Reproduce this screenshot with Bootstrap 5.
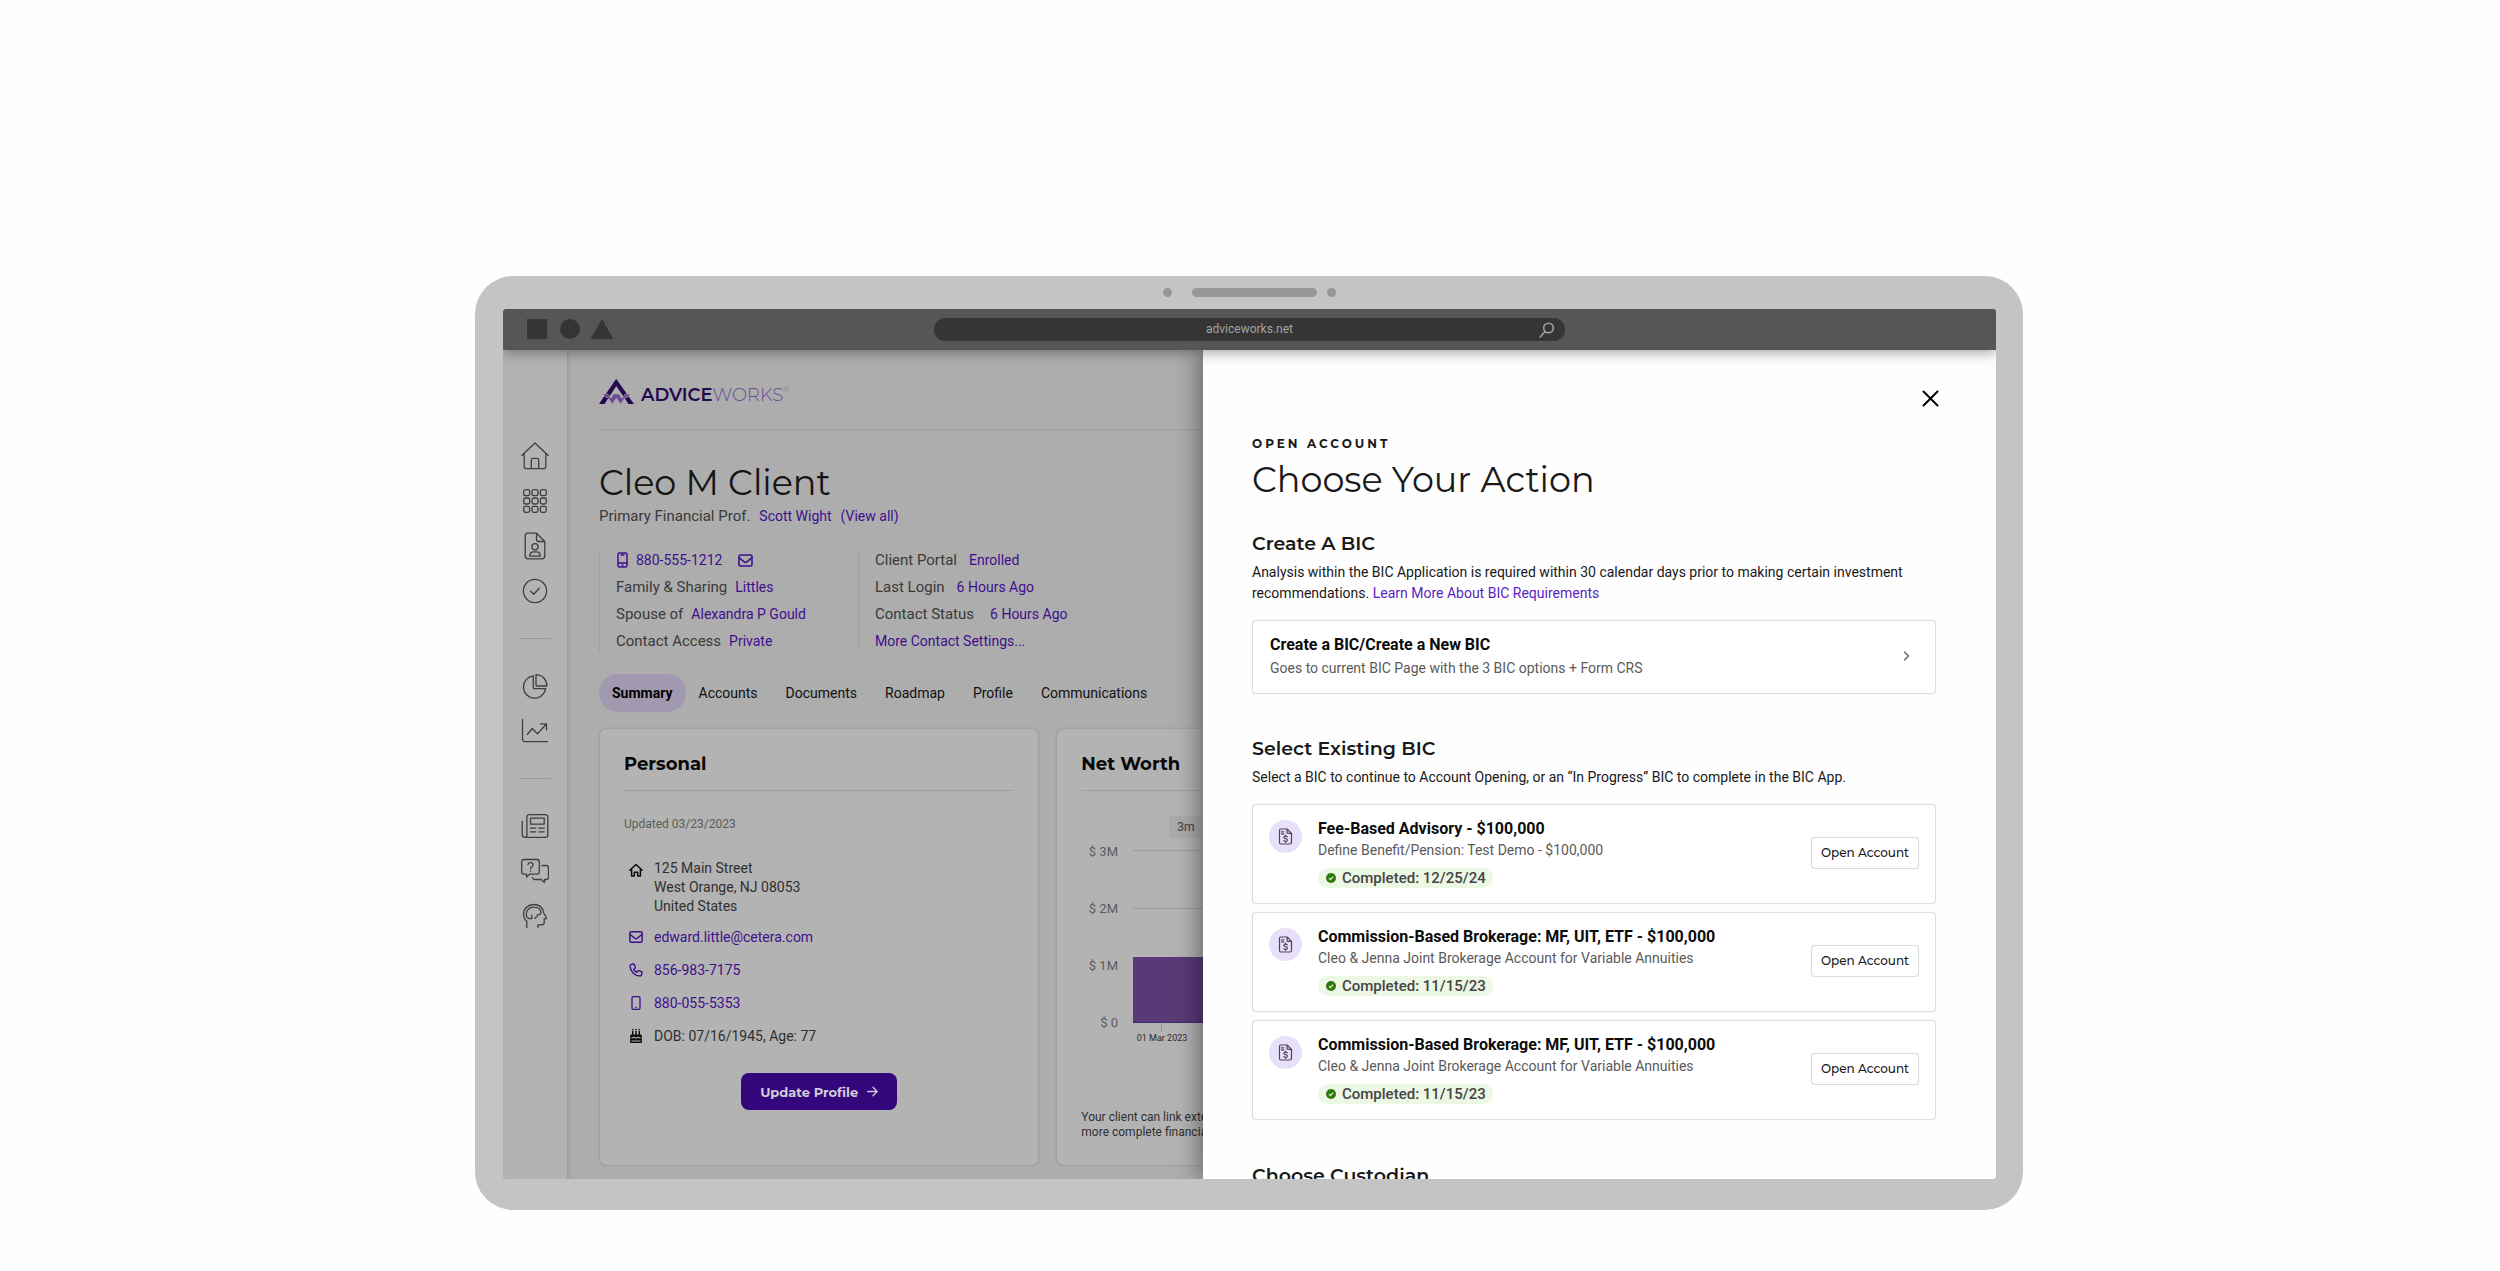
<!DOCTYPE html>
<html lang="en">
<head>
<meta charset="utf-8">
<meta name="viewport" content="width=device-width, initial-scale=1">
<title>AdviceWorks – Open Account</title>
<link href="https://cdn.jsdelivr.net/npm/bootstrap@5.3.0/dist/css/bootstrap.min.css" rel="stylesheet">
<style>
  :root { --display: Montserrat, Inter, sans-serif; --purple: #3f0f8c; }
  body { font-family: Roboto, sans-serif; font-size: 14px; line-height: 20px; color: #191919; background: #fefefe; }
  a { text-decoration: none; color: var(--purple); }
  svg { flex: none; display: block; }
  .line-art { fill: none; stroke: currentColor; stroke-linecap: round; stroke-linejoin: round; }
  h1, h2, h3, p { margin: 0; }
  h1, h2 { font-family: var(--display); }
  h1 { font-size: 35px; line-height: 40px; font-weight: 400; }
  h2 { font-size: 19px; line-height: 24px; font-weight: 600; }
  h3 { font-size: 16px; line-height: 22px; font-weight: 700; color: #0c0c0c; }
  hr { margin: 0; opacity: 1; border-color: #9f9f9f; }

  .stage { padding: 276px 2px 60px 0; }
  .device { max-width: 1548px; padding: 10px 27px 31px 28px; border-radius: 38px; background: #c4c4c4; }
  .camera { height: 13px; margin-bottom: 10px; }
  .lens { width: 9px; height: 9px; background: #979797; }
  .speaker { width: 125px; height: 9px; margin: 0 10px 0 20px; background: #979797; }
  .viewport { border-radius: 3px; overflow: hidden; }
  .chrome { height: 41px; background: #565656; box-shadow: 0 3px 12px rgba(0,0,0,.35); z-index: 3; }
  .chrome-side { flex: 1; padding-left: 24px; }
  .address { width: 631px; height: 23px; padding: 0 10px; background: #353535; color: #a3a3a3; }
  .address input { background: none; border: 0; color: inherit; font-size: 12px; line-height: 16px; text-align: center; padding: 0 0 2px 16px; outline: 0; }

  .app { background: #adadad; }
  .rail { width: 64px; padding-top: 92px; gap: 17px; background: #b3b3b3; box-shadow: 1px 0 4px rgba(0,0,0,.13); color: #3f3f3f; z-index: 1; }
  .rail a { color: inherit; }
  .rail hr { width: 31px; margin: 16px 0; border-color: #9a9a9a; }
  .rail svg { width: 28px; height: 28px; stroke-width: 1.3; }
  .content { padding: 28px 42px 13px 32px; color: #3a3a3a; }
  .brand { font-family: var(--display); height: 26px; margin-bottom: 25px; font-size: 18px; gap: 4px; line-height: 18px; }
  .brand b { font-weight: 600; color: #240850; }
  .brand span { font-weight: 300; color: #6c4a96; }
  .brand sup { font-size: 7px; top: -9px; }
  .content h1 { margin-top: 33px; color: #141414; }
  .content h2 { color: #080808; font-size: 18px; font-weight: 700; }
  .advisor { line-height: 24px; margin-top: 1px; gap: 9px; }
  .advisor span, .facts span { font-size: 15px; }
  .facts { gap: 7px; border-left: 1px solid #9f9f9f; padding-left: 16px; width: 259px; margin-top: 22px; white-space: nowrap; }
  .facts > div { gap: 8px; }
  .tabs { margin-top: 23px; gap: 28px; line-height: 38px; height: 38px; }
  .tabs a { color: #111; }
  .tabs .active { background: #a199b0; font-weight: 700; padding: 0 13px; margin-right: -15px; border-radius: 19px; color: #000; }
  .panels { display: grid; grid-template-columns: repeat(3, 1fr); gap: 17px; margin-top: 16px; }
  .panel { background: #b3b3b3; border: 1px solid #a2a2a2; border-radius: 8px; padding: 23px 24px 25px; box-shadow: 0 0 2px rgba(0,0,0,.1); }
  .panel hr { margin-top: 14px; }
  .updated { font-size: 12px; line-height: 18px; margin-top: 24px; color: #5c5c5c; }
  .contact { gap: 13px; margin-top: 26px; padding-left: 5px; color: #2f2f2f; }
  .contact > div, .contact > a { gap: 11px; }
  .contact svg { width: 14px; height: 14px; }
  .contact address { margin: 0 0 -2px; line-height: 19px; }
  .update-btn { background: #33067b; color: #d0cbd8; font: 700 13px/20px var(--display); border-radius: 8px; height: 37px; width: 156px; margin: 27px auto 0; gap: 9px; }
  .range { margin: 25px 0 0 88px; width: 60px; height: 22px; padding: 0 8px; border: 0; background: #aaa; font-size: 12px; line-height: 22px; text-align: left; color: #3c3c3c; }
  .note { font-size: 12px; line-height: 15px; margin-top: 58px; color: #2f2f2f; }

  .drawer { width: 793px; max-width: 100%; background: #fefefe; padding: 36px 60px 0 49px; overflow: hidden; box-shadow: -4px 0 22px rgba(0,0,0,.42); z-index: 2; }
  .drawer a { color: #5a1fc0; }
  .close-x { width: 28px; height: 24px; margin-right: -8px; padding: 0; border: 0; background: none; color: #000; }
  .eyebrow { font: 700 12px/16px var(--display); letter-spacing: 3px; margin-top: 26px; }
  .drawer h1 { margin: 8px 0 32px; }
  .drawer .lead-in { line-height: 21px; margin-top: 6px; }
  .tile { border: 1px solid #dedede; border-radius: 4px; box-shadow: 0 0 1px rgba(0,0,0,.15); background: #fff; }
  .drawer .tile-link { padding: 12px 25px 14px 17px; margin: 16px 0 43px; line-height: 22px; color: #5a5a5a; }
  .tile-link h3 { line-height: 24px; }
  .bic-list { gap: 8px; margin: 16px 0 44px; }
  .bic { padding: 13px 16px 15px; gap: 16px; color: #5a5a5a; }
  .bic-icon { width: 33px; height: 33px; margin-top: 2px; background: #e8dffa; color: #4c4658; }
  .done { margin-top: 8px; padding: 0 7px 0 8px; gap: 6px; height: 20px; font-size: 15px; line-height: 20px; font-weight: 500; background: #ecf7e4; color: #454545; }
  .open-btn { width: 108px; height: 32px; padding: 0; border: 1px solid #dcdcdc; border-radius: 4px; background: #fff; font: 500 12px/16px var(--display); color: #191919; box-shadow: 0 0 1px rgba(0,0,0,.15); }
</style>
</head>
<body>

<svg width="0" height="0" class="position-absolute" aria-hidden="true">
  <symbol id="mail" viewBox="0 0 16 14"><rect x="1" y="1" width="14" height="12" rx="1.4"/><path d="M1 4l5.6 4.4a2.2 2.2 0 0 0 2.8 0L15 4"/></symbol>
  <symbol id="bill" viewBox="0 0 16 18"><path d="M9.700 1H3.200C2.300 1 1.600 1.700 1.600 2.600v12.800C1.600 16.300 2.300 17 3.200 17h9.600c.9 0 1.600-.7 1.600-1.600V5.700zM9.700 1v3.600c0 .6.5 1.100 1.100 1.100h3.600"/><path d="M3.800 4h2.400M3.800 6.200h2.400"/><path d="M9.900 9.300c-.5-.6-1.200-.7-1.900-.7-1 0-1.800.5-1.800 1.300 0 1.900 3.800.9 3.800 2.900 0 .8-.8 1.400-1.900 1.400-.8 0-1.500-.2-2-.8M8 7.600v1M8 14.200v1"/></symbol>
  <symbol id="tick" viewBox="0 0 10 10"><circle cx="5" cy="5" r="5" fill="#2c7a0c"/><path d="M2.900 5.200l1.500 1.400 2.700-3" fill="none" stroke="#ecf7e4" stroke-width="1.100"/></symbol>
</svg>

<main class="stage min-vh-100">
  <div class="device mx-auto">
    <div class="camera d-flex justify-content-center align-items-center">
      <span class="lens rounded-circle"></span><span class="speaker rounded-pill"></span><span class="lens rounded-circle"></span>
    </div>

    <div class="viewport">
      <header class="chrome d-flex align-items-center position-relative">
        <div class="chrome-side">
          <svg width="86" height="21" fill="#353535" aria-hidden="true"><path d="M0 0h20v20H0zM75 0l11.500 20h-23z"/><circle cx="43" cy="10" r="10"/></svg>
        </div>
        <div class="address d-flex align-items-center rounded-pill">
          <input class="flex-grow-1" type="text" value="adviceworks.net" aria-label="Address" readonly>
          <svg class="line-art" width="16" height="16" stroke-width="1.600"><circle cx="9.500" cy="6" r="4.800"/><path d="M6 9.500L1.200 15"/></svg>
        </div>
        <div class="chrome-side"></div>
      </header>

      <div class="app d-flex position-relative">
        <nav class="rail d-flex flex-column align-items-center flex-shrink-0" aria-label="Main">
          <a href="#" aria-label="Home"><svg class="line-art" viewBox="0 0 28 28"><path d="M0.800 13.500L14 1l13.200 12.500M3.200 11.500v12.700c0 1.500 1 2.500 2.500 2.500h16.600c1.500 0 2.500-1 2.500-2.500V11.500M10.300 26.500V18c0-1 .6-1.600 1.600-1.600h4.200c1 0 1.600.6 1.600 1.600v8.500"/></svg></a>
          <a href="#" aria-label="Apps"><svg class="line-art" viewBox="0 0 28 28"><g id="dots"><rect x="2.700" y="2.700" width="6" height="6" rx="1.800"/><rect x="11" y="2.700" width="6" height="6" rx="1.800"/><rect x="19.300" y="2.700" width="6" height="6" rx="1.800"/></g><use href="#dots" y="8.300"/><use href="#dots" y="16.600"/></svg></a>
          <a href="#" aria-label="Client file"><svg class="line-art" viewBox="0 0 28 28"><path d="M15.500 1.200H7C5.300 1.200 4.200 2.300 4.200 4v20c0 1.700 1.100 2.800 2.800 2.800h14c1.700 0 2.800-1.100 2.800-2.800V9.500zM15.500 1.200v6.300c0 1.200.8 2 2 2h6.300"/><circle cx="14" cy="14.700" r="3.100"/><path d="M8.700 24.200c0-2.700 1.500-4.300 3.800-4.300h3c2.300 0 3.800 1.600 3.800 4.300z"/></svg></a>
          <a href="#" aria-label="Tasks"><svg class="line-art" viewBox="0 0 28 28"><circle cx="14" cy="14" r="11.600"/><path d="M9.600 14.300l3.200 3 5.400-6"/></svg></a>
          <hr>
          <a href="#" aria-label="Allocation"><svg class="line-art" viewBox="0 0 28 28"><path d="M12.300 3.800A11.200 11.200 0 1 0 24.700 16.700H13.500c-.8 0-1.200-.4-1.200-1.200z"/><path d="M15 2.600v10.300c0 .7.400 1.100 1.100 1.100h9.700A11 11 0 0 0 15 2.600z"/></svg></a>
          <a href="#" aria-label="Performance"><svg class="line-art" viewBox="0 0 28 28"><path d="M1.500 2.500v19c0 2 1 3.200 3.200 3.200h22M6.200 17.500l5-6 5.300 5.200L25.500 7M19.500 6.800h6v6"/></svg></a>
          <hr>
          <a href="#" aria-label="News"><svg class="line-art" viewBox="0 0 28 28"><path d="M1.200 9.500v12.700c0 1.900 1.200 3.200 3 3.200h20.300c1.400 0 2.300-.9 2.300-2.300V4.900c0-1.400-.9-2.300-2.300-2.300H8.200c-1.400 0-2.300.9-2.300 2.300v17.500c0 1.700-.7 2.800-1.900 3"/><rect x="9.500" y="6.200" width="13.700" height="6"/><path d="M9.500 16.200h5.300M17.900 16.200h5.300M9.500 19.900h5.300M17.900 19.900h5.300"/></svg></a>
          <a href="#" aria-label="Help chat"><svg class="line-art" viewBox="0 0 28 28"><path d="M3 2.500h13c1.500 0 2.300.8 2.300 2.300v10c0 1.500-.8 2.300-2.300 2.300H8.800L5.500 20v-2.900H3C1.500 17.100.7 16.300.7 14.800v-10C.7 3.300 1.500 2.500 3 2.500z"/><path d="M21 8.500h4.300c1.400 0 2.200.8 2.200 2.200v9.600c0 1.400-.8 2.200-2.200 2.200h-1.800v3l-3.300-3h-6.500c-1.300 0-2.100-.7-2.300-2"/><path d="M6.900 7.500c.3-1.200 1.300-1.800 2.600-1.800 1.500 0 2.600.9 2.600 2.200 0 2-2.500 1.900-2.500 4M9.600 13.900v.3"/></svg></a>
          <a href="#" aria-label="Insights"><svg class="line-art" viewBox="0 0 28 28"><path d="M5.800 25.500v-6.300C3.700 17.500 2.600 15 2.600 12.200 2.600 6.600 7 2.500 12.700 2.500c5.900 0 9.300 3.500 10 8.500l2.600 4.500c.3.600 0 1.200-.8 1.300l-1.300.2v3.600c0 1.500-.8 2.300-2.300 2.300h-4v2.500"/><path d="M10.800 13.200v3.300c-3.200.6-5.700-1-5.500-3.800C5 8.300 8.400 5.200 12.700 5.200c4.300 0 7.100 2.200 7.300 5.600.1 1.500-1.600 2-3.300 1.900-.3 2-1.200 2.900-3 3.700"/></svg></a>
        </nav>

        <div class="content flex-grow-1">
          <div class="brand d-flex align-items-end">
            <svg width="38" height="26" aria-hidden="true"><path d="M0 26L16 2.500 17.300 1 35 26h-5.500L17.300 8 5.500 26z" fill="#240850"/><path d="M4 16h5l3 4.500 2.500-4.500h5.500l3 4.500L26 16h5l-2.500 3.500-2.500.3L21.500 26l-4.200-6-4 6L9 19.800l-2-.3z" fill="#6c4a96" stroke="#adadad" stroke-width=".5"/></svg>
            <div><b>ADVICE</b><span>WORKS<sup>®</sup></span></div>
          </div>
          <hr>
          <h1>Cleo M Client</h1>
          <div class="advisor d-flex"><span>Primary Financial Prof.</span><a href="#">Scott Wight</a><a href="#">(View all)</a></div>

          <div class="d-flex">
            <div class="facts d-flex flex-column">
              <div class="d-flex align-items-center"><a href="#" class="d-flex align-items-center gap-2"><svg class="line-art" width="12" height="16" stroke-width="1.500"><rect x="2" y="1" width="9" height="14" rx="1.500"/><path d="M2 11h9M6 13h1M5 3h3" /></svg>880-555-1212</a><a href="#" class="ms-2" aria-label="Send email"><svg class="line-art" width="15" height="13" stroke-width="1.700"><use href="#mail"/></svg></a></div>
              <div class="d-flex"><span>Family &amp; Sharing</span><a href="#">Littles</a></div>
              <div class="d-flex"><span>Spouse of</span><a href="#">Alexandra P Gould</a></div>
              <div class="d-flex"><span>Contact Access</span><a href="#">Private</a></div>
            </div>
            <div class="facts d-flex flex-column">
              <div class="d-flex"><span>Client Portal</span><a href="#" class="ms-1">Enrolled</a></div>
              <div class="d-flex"><span>Last Login</span><a href="#" class="ms-1">6 Hours Ago</a></div>
              <div class="d-flex"><span>Contact Status</span><a href="#" class="ms-2">6 Hours Ago</a></div>
              <div class="d-flex"><a href="#">More Contact Settings...</a></div>
            </div>
          </div>

          <nav class="tabs d-flex" aria-label="Client sections">
            <a href="#" class="active" aria-current="page">Summary</a><a href="#">Accounts</a><a href="#">Documents</a><a href="#">Roadmap</a><a href="#">Profile</a><a href="#">Communications</a>
          </nav>

          <div class="panels">
            <section class="panel">
              <h2>Personal</h2>
              <hr>
              <p class="updated">Updated 03/23/2023</p>
              <div class="contact d-flex flex-column">
                <div class="d-flex"><svg class="line-art mt-1" viewBox="0 0 14 14" stroke-width="1.500"><path d="M.8 7.300L7 1.500l6.200 5.800M2.600 6v7h2.700V9.200h3.400V13h2.700V6" stroke="#0c0c0c"/></svg><address>125 Main Street<br>West Orange, NJ 08053<br>United States</address></div>
                <a href="#" class="d-flex align-items-center"><svg class="line-art" stroke-width="1.700"><use href="#mail"/></svg>edward.little@cetera.com</a>
                <a href="#" class="d-flex align-items-center"><svg class="line-art" viewBox="0 0 16 16" stroke-width="1.600"><path d="M4.800 1.100L1.900 1.900c-.5.200-.8.600-.8 1.100C1.400 9.700 6.300 14.600 13 14.900c.5 0 .9-.3 1.100-.8l.8-2.900c.1-.5-.1-1-.6-1.200l-3-1.200c-.4-.2-.9-.1-1.200.3l-1.200 1.400C7 9.700 6.300 9 5.500 7.100l1.400-1.200c.4-.3.500-.8.300-1.200L6 1.700c-.2-.5-.7-.7-1.200-.6z"/></svg>856-983-7175</a>
                <a href="#" class="d-flex align-items-center"><svg class="line-art" viewBox="0 0 14 14" stroke-width="1.300"><rect x="3" y=".7" width="8" height="12.600" rx="1"/><path d="M6.700 11.300h.6"/></svg>880-055-5353</a>
                <div class="d-flex align-items-center"><svg viewBox="0 0 14 14" fill="#0c0c0c"><path d="M3 2h1.400v4H3zM6.300 2h1.400v4H6.300zM9.600 2H11v4H9.600zM3 0h1.400v1.300H3zM6.300 0h1.400v1.300H6.300zM9.600 0H11v1.300H9.600z"/><path fill-rule="evenodd" d="M2.500 5.500h9c.8 0 1.300.5 1.300 1.300V14H1.200V6.800c0-.8.500-1.300 1.300-1.300zM2.500 9.300c1 .8 1.500-.6 2.300-.6S6 9.700 7 9.700s1.500-1 2.200-1 1.300 1.400 2.300.6V8.100c-1 .8-1.500-.6-2.300-.6S8 8.500 7 8.500s-1.500-1-2.200-1-1.300 1.400-2.300.6zm0 2.200v1h9v-1z"/></svg><span>DOB: 07/16/1945, Age: 77</span></div>
              </div>
              <button type="button" class="update-btn btn d-flex align-items-center justify-content-center p-0">Update Profile<svg class="line-art" width="11" height="11" stroke-width="1.300"><path d="M.7 5.500h9.500M6 1.300l4.200 4.200L6 9.700"/></svg></button>
            </section>

            <section class="panel">
              <h2>Net Worth</h2>
              <hr>
              <button type="button" class="range d-block">3m</button>
              <svg width="390" height="214" role="img" aria-label="Net worth by month" font-family="Roboto, sans-serif" font-size="13" fill="#5c5c5c">
                <path d="M52 12.500h338M52 70.500h338" stroke="#9c9c9c"/>
                <rect x="52" y="119" width="338" height="65" fill="#593a77"/>
                <path d="M52 184.500h338" stroke="#3f2a6c"/>
                <path d="M80.500 185v9" stroke="#8b93a8"/>
                <g text-anchor="end"><text x="37" y="18">$ 3M</text><text x="37" y="75">$ 2M</text><text x="37" y="132">$ 1M</text><text x="37" y="189">$ 0</text></g>
                <text x="81" y="203" text-anchor="middle" font-size="9" fill="#2c2c2c">01 Mar 2023</text>
              </svg>
              <p class="note">Your client can link external accounts for a<br>more complete financial picture.</p>
            </section>
          </div>
        </div>

        <aside class="drawer position-absolute top-0 bottom-0 end-0" aria-label="Open account">
          <button type="button" class="close-x d-flex align-items-center justify-content-center ms-auto" aria-label="Close"><svg class="line-art" width="17" height="17" stroke-width="2"><path d="M1.500 1.500l14 14M15.500 1.500l-14 14"/></svg></button>
          <p class="eyebrow">OPEN ACCOUNT</p>
          <h1>Choose Your Action</h1>

          <h2>Create A BIC</h2>
          <p class="lead-in">Analysis within the BIC Application is required within 30 calendar days prior to making certain investment<br>recommendations. <a href="#">Learn More About BIC Requirements</a></p>
          <a href="#" class="tile tile-link d-flex align-items-center justify-content-between">
            <div><h3>Create a BIC/Create a New BIC</h3>Goes to current BIC Page with the 3 BIC options + Form CRS</div>
            <svg class="line-art" width="7" height="10" stroke="#777" stroke-width="1.200"><path d="M1.500 1l4 4-4 4"/></svg>
          </a>

          <h2>Select Existing BIC</h2>
          <p class="lead-in">Select a BIC to continue to Account Opening, or an “In Progress” BIC to complete in the BIC App.</p>
          <div class="bic-list d-flex flex-column">
            <article class="tile bic d-flex">
              <span class="bic-icon rounded-circle d-flex align-items-center justify-content-center flex-shrink-0"><svg class="line-art" width="15" height="17" stroke-width="1.300"><use href="#bill"/></svg></span>
              <div class="flex-grow-1"><h3>Fee-Based Advisory - $100,000</h3><p>Define Benefit/Pension: Test Demo - $100,000</p><span class="done d-inline-flex align-items-center rounded-pill"><svg width="10" height="10"><use href="#tick"/></svg>Completed: 12/25/24</span></div>
              <button type="button" class="open-btn align-self-center">Open Account</button>
            </article>
            <article class="tile bic d-flex">
              <span class="bic-icon rounded-circle d-flex align-items-center justify-content-center flex-shrink-0"><svg class="line-art" width="15" height="17" stroke-width="1.300"><use href="#bill"/></svg></span>
              <div class="flex-grow-1"><h3>Commission-Based Brokerage: MF, UIT, ETF - $100,000</h3><p>Cleo &amp; Jenna Joint Brokerage Account for Variable Annuities</p><span class="done d-inline-flex align-items-center rounded-pill"><svg width="10" height="10"><use href="#tick"/></svg>Completed: 11/15/23</span></div>
              <button type="button" class="open-btn align-self-center">Open Account</button>
            </article>
            <article class="tile bic d-flex">
              <span class="bic-icon rounded-circle d-flex align-items-center justify-content-center flex-shrink-0"><svg class="line-art" width="15" height="17" stroke-width="1.300"><use href="#bill"/></svg></span>
              <div class="flex-grow-1"><h3>Commission-Based Brokerage: MF, UIT, ETF - $100,000</h3><p>Cleo &amp; Jenna Joint Brokerage Account for Variable Annuities</p><span class="done d-inline-flex align-items-center rounded-pill"><svg width="10" height="10"><use href="#tick"/></svg>Completed: 11/15/23</span></div>
              <button type="button" class="open-btn align-self-center">Open Account</button>
            </article>
          </div>

          <h2>Choose Custodian</h2>
        </aside>
      </div>
    </div>
  </div>
</main>
<script src="https://cdn.jsdelivr.net/npm/bootstrap@5.3.0/dist/js/bootstrap.bundle.min.js"></script>
</body>
</html>
